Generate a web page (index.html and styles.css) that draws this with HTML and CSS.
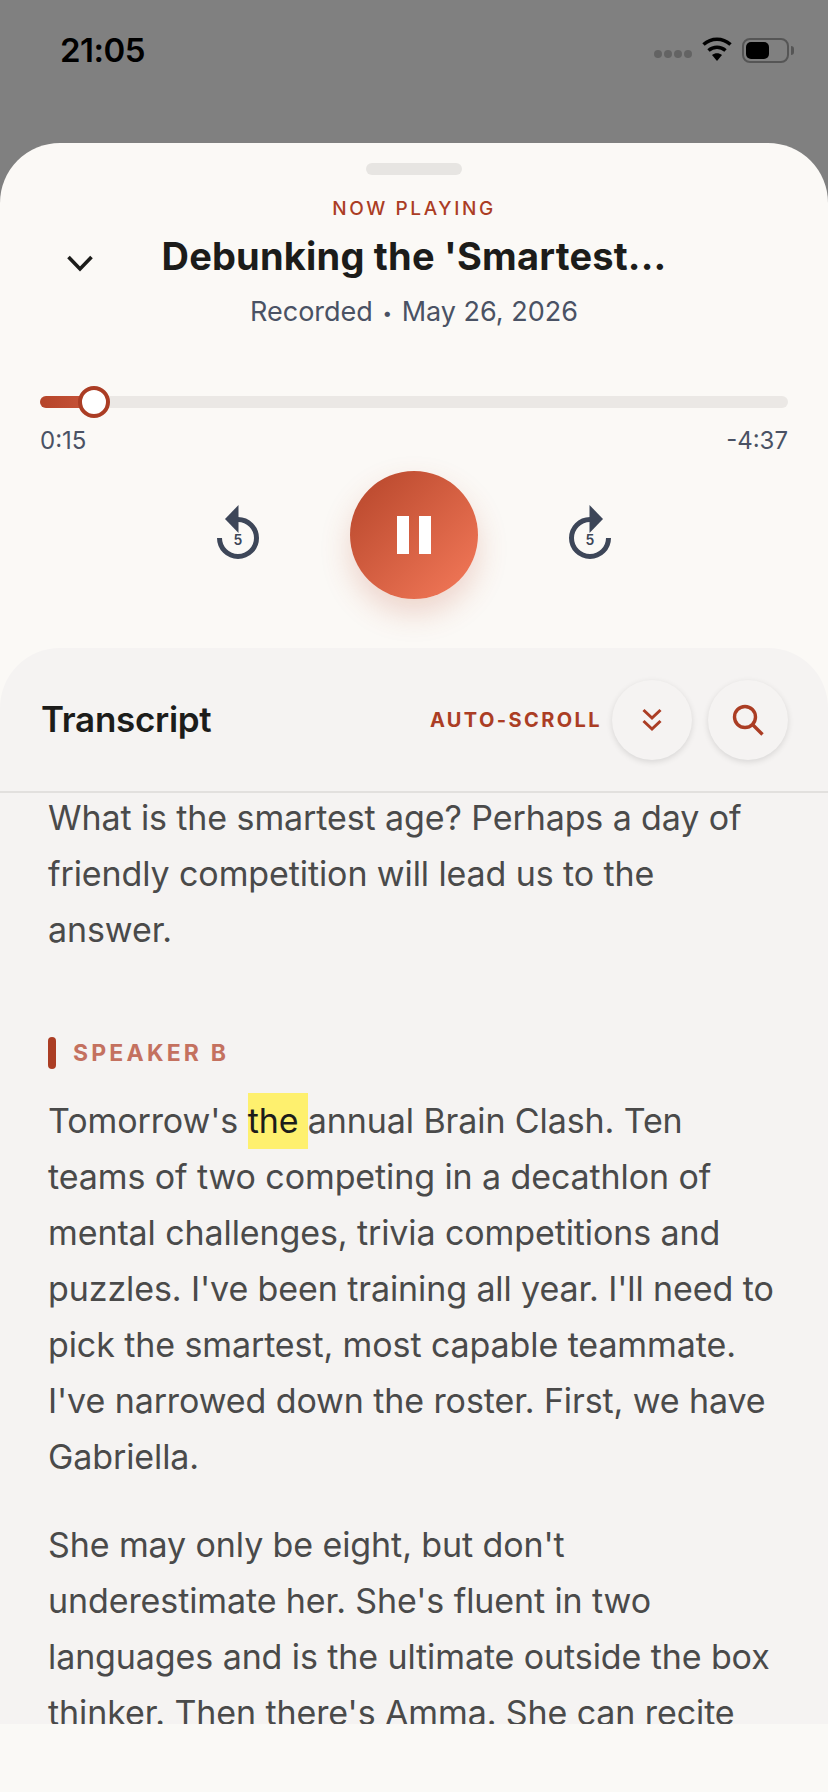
FILE: index.html
```html
<!DOCTYPE html>
<html lang="en">
<head>
    <meta charset="utf-8"/>
    <title>Now Playing</title>
    <meta name="viewport" content="width=device-width, initial-scale=1">
    <link rel="stylesheet" href="styles.css">
</head>
<body>
<div class="screen">
    <div class="status-bar">
        <span class="clock">21:05</span>
        <div class="status-icons">
            <span class="signal"><i></i><i></i><i></i><i></i></span>
            <svg class="wifi" width="32" height="26" viewBox="0 0 32 26">
                <path d="M16 25l-5-6c3-2.400 7-2.400 10 0z" fill="#000"/>
                <path d="M7.500 14.500c5-4.300 12-4.300 17 0" fill="none" stroke="#000" stroke-width="3.600"/>
                <path d="M2.500 8.500c8-7 19-7 27 0" fill="none" stroke="#000" stroke-width="3.600"/>
            </svg>
            <span class="battery"><span class="battery-level"></span></span>
            <span class="battery-cap"></span>
        </div>
    </div>

    <div class="sheet">
        <div class="handle"></div>
        <div class="eyebrow">NOW PLAYING</div>
        <div class="title-row">
            <svg class="chevron" width="28" height="18" viewBox="0 0 28 18">
                <path d="M2.500 3l11.500 12 11.500-12" fill="none" stroke="#1c1c1a" stroke-width="3.600"/>
            </svg>
            <h1 class="title">Debunking the 'Smartest...</h1>
        </div>
        <div class="meta">Recorded <span class="meta-dot">•</span> May 26, 2026</div>

        <div class="slider">
            <div class="slider-fill"></div>
            <div class="slider-thumb"></div>
        </div>
        <div class="times">
            <span>0:15</span>
            <span>-4:37</span>
        </div>

        <div class="controls">
            <button class="skip" title="back 5">
                <svg width="46" height="56" viewBox="0 0 46 56">
                    <path d="M4.500 35a18.500 18.500 0 1 0 18.500-18.500" fill="none" stroke="#3d4658" stroke-width="5"/>
                    <path d="M23.500 2v28l-13.500-14z" fill="#3d4658"/>
                </svg>
                <span class="skip-num">5</span>
            </button>
            <button class="play" title="pause">
                <span class="pause-bar"></span>
                <span class="pause-bar"></span>
            </button>
            <button class="skip" title="forward 5">
                <svg width="46" height="56" viewBox="0 0 46 56">
                    <path d="M41.500 35a18.500 18.500 0 1 1-18.500-18.500" fill="none" stroke="#3d4658" stroke-width="5"/>
                    <path d="M22.500 2v28l13.500-14z" fill="#3d4658"/>
                </svg>
                <span class="skip-num">5</span>
            </button>
        </div>

        <div class="transcript">
            <div class="transcript-head">
                <h2 class="transcript-title">Transcript</h2>
                <span class="auto-label">AUTO-SCROLL</span>
                <button class="round-btn" title="auto scroll">
                    <svg width="24" height="26" viewBox="0 0 24 26">
                        <path d="M3.500 3l8.500 8 8.500-8M3.500 14l8.500 8 8.500-8" fill="none" stroke="#ab3d24" stroke-width="3"/>
                    </svg>
                </button>
                <button class="round-btn" title="search">
                    <svg width="34" height="34" viewBox="0 0 34 34">
                        <circle cx="14" cy="14" r="10.500" fill="none" stroke="#ab3d24" stroke-width="3.400"/>
                        <path d="M21.500 21.500l10 10" fill="none" stroke="#ab3d24" stroke-width="3.400"/>
                    </svg>
                </button>
            </div>
            <div class="transcript-body">
                <p class="para-lead">What is the smartest age? Perhaps a day of friendly competition will lead us to the answer.</p>
                <div class="speaker"><span class="speaker-bar"></span>SPEAKER B</div>
                <p class="para-first">Tomorrow's <mark>the </mark>annual Brain Clash. Ten teams of two competing in a decathlon of mental challenges, trivia competitions and puzzles. I've been training all year. I'll need to pick the smartest, most capable teammate. I've narrowed down the roster. First, we have Gabriella.</p>
                <p class="para-next">She may only be eight, but don't underestimate her. She's fluent in two languages and is the ultimate outside the box thinker. Then there's Amma. She can recite</p>
            </div>
        </div>
        <div class="footer"></div>
    </div>
</div>
</body>
</html>
```

FILE: styles.css
```css
html {
    font-family: Inter, "Noto Sans", sans-serif;
}
body {
    margin: 0;
    background: #808080;
}
button {
    border: none;
    padding: 0;
    background: none;
}
.screen {
    width: 828px;
    height: 1792px;
    display: flex;
    flex-direction: column;
    overflow: hidden;
    background: #808080;
}
.status-bar {
    height: 143px;
    flex: none;
    box-sizing: border-box;
    padding: 31px 34px 0 60px;
    display: flex;
    justify-content: space-between;
    align-items: flex-start;
}
.clock {
    font-size: 33px;
    line-height: 38px;
    font-weight: 600;
    letter-spacing: -0.5px;
    color: #000;
}
.status-icons {
    display: flex;
    align-items: center;
    height: 38px;
}
.signal {
    display: flex;
    gap: 2px;
    margin-top: 8px;
    margin-right: 9px;
}
.signal i {
    width: 8px;
    height: 8px;
    border-radius: 50%;
    background: #636363;
}
.wifi {
    margin-right: 9px;
    margin-top: -2px;
}
.battery {
    box-sizing: border-box;
    width: 47px;
    height: 25px;
    border: 2px solid #555;
    border-radius: 8px;
    padding: 2px;
    display: flex;
}
.battery-level {
    width: 23px;
    background: #000;
    border-radius: 5px;
}
.battery-cap {
    width: 3px;
    height: 9px;
    margin-left: 2px;
    background: #555;
    border-radius: 0 3px 3px 0;
}
.sheet {
    flex: 1;
    min-height: 0;
    display: flex;
    flex-direction: column;
    background: #fbf9f6;
    border-radius: 60px 60px 0 0;
}
.handle {
    width: 96px;
    height: 12px;
    margin: 20px auto 0;
    border-radius: 6px;
    background: #e7e5e2;
}
.eyebrow {
    margin-top: 22px;
    text-align: center;
    font-size: 19px;
    line-height: 24px;
    font-weight: 500;
    letter-spacing: 2.6px;
    color: #ab3d24;
}
.title-row {
    position: relative;
    margin-top: 11px;
    height: 48px;
}
.chevron {
    position: absolute;
    left: 66px;
    top: 22px;
}
.title {
    margin: 0;
    text-align: center;
    font-size: 38px;
    line-height: 48px;
    font-weight: 700;
    letter-spacing: 0.2px;
    color: #1c1c1a;
}
.meta {
    margin-top: 15px;
    text-align: center;
    font-size: 27px;
    line-height: 34px;
    color: #4a5264;
}
.meta-dot {
    font-size: 17px;
    vertical-align: 2px;
    margin: 0 2px;
}
.slider {
    position: relative;
    height: 12px;
    margin: 66px 40px 0;
    border-radius: 6px;
    background: #ebe8e5;
}
.slider-fill {
    width: 55px;
    height: 12px;
    border-radius: 6px 0 0 6px;
    background: linear-gradient(90deg, #b5452a, #c9553a);
}
.slider-thumb {
    position: absolute;
    left: 38px;
    top: -10px;
    box-sizing: border-box;
    width: 32px;
    height: 32px;
    border: 4px solid #ab3d24;
    border-radius: 50%;
    background: #fff;
}
.times {
    display: flex;
    justify-content: space-between;
    margin: 19px 40px 0;
    font-size: 24px;
    line-height: 28px;
    color: #4a5264;
}
.controls {
    display: flex;
    justify-content: center;
    align-items: center;
    gap: 56px;
    margin-top: 16px;
}
.skip {
    position: relative;
    width: 48px;
    height: 56px;
    margin-top: -8px;
}
.skip svg {
    display: block;
    margin: 0 auto;
}
.skip-num {
    position: absolute;
    left: 0;
    right: 0;
    top: 28px;
    text-align: center;
    font-family: Inter, sans-serif;
    font-size: 14px;
    line-height: 18px;
    font-weight: 600;
    color: #3d4658;
}
.play {
    width: 128px;
    height: 128px;
    margin: 0 32px;
    display: flex;
    justify-content: center;
    align-items: center;
    gap: 10px;
    border-radius: 50%;
    background: linear-gradient(135deg, #b5452a, #f57a5a);
    box-shadow: 0 14px 30px rgba(190, 80, 50, 0.22);
}
.pause-bar {
    width: 12px;
    height: 38px;
    background: #fff;
}
.transcript {
    margin-top: 49px;
    flex: 1;
    min-height: 0;
    display: flex;
    flex-direction: column;
    border-radius: 60px 60px 0 0;
    background: #f5f3f2;
}
.transcript-head {
    flex: none;
    height: 145px;
    box-sizing: border-box;
    padding: 32px 40px 0 41px;
    display: flex;
    align-items: flex-start;
    border-bottom: 2px solid #e2e0de;
}
.transcript-title {
    margin: 0 auto 0 0;
    font-size: 35px;
    line-height: 78px;
    font-weight: 600;
    letter-spacing: -0.3px;
    color: #1c1c1a;
}
.auto-label {
    margin-right: 10px;
    font-size: 20px;
    line-height: 80px;
    font-weight: 700;
    letter-spacing: 2.4px;
    color: #ab3d24;
}
.round-btn {
    width: 80px;
    height: 80px;
    margin-left: 16px;
    display: flex;
    justify-content: center;
    align-items: center;
    border-radius: 50%;
    background: #f5f3f2;
    box-shadow: 0 2px 6px rgba(0, 0, 0, 0.12);
}
.auto-label + .round-btn {
    margin-left: 0;
}
.transcript-body {
    flex: 1;
    min-height: 0;
    overflow: hidden;
    padding: 0 50px 0 48px;
    font-size: 34px;
    line-height: 56px;
    letter-spacing: -0.1px;
    color: #4a4a4a;
}
.transcript-body p {
    margin: 0;
}
.transcript-body .para-lead {
    margin-top: -3px;
}
.speaker {
    display: flex;
    align-items: center;
    margin-top: 79px;
    height: 32px;
    font-size: 23px;
    font-weight: 700;
    letter-spacing: 3.2px;
    color: #c4715f;
}
.speaker-bar {
    width: 8px;
    height: 32px;
    margin-right: 17px;
    border-radius: 4px;
    background: #ab3d24;
}
.transcript-body .para-first {
    margin-top: 24px;
}
.transcript-body .para-next {
    margin-top: 32px;
}
mark {
    display: inline-block;
    white-space: pre;
    background: #fef06e;
    color: #1c1c1a;
}
.footer {
    flex: none;
    height: 68px;
    background: #faf9f6;
}
```
